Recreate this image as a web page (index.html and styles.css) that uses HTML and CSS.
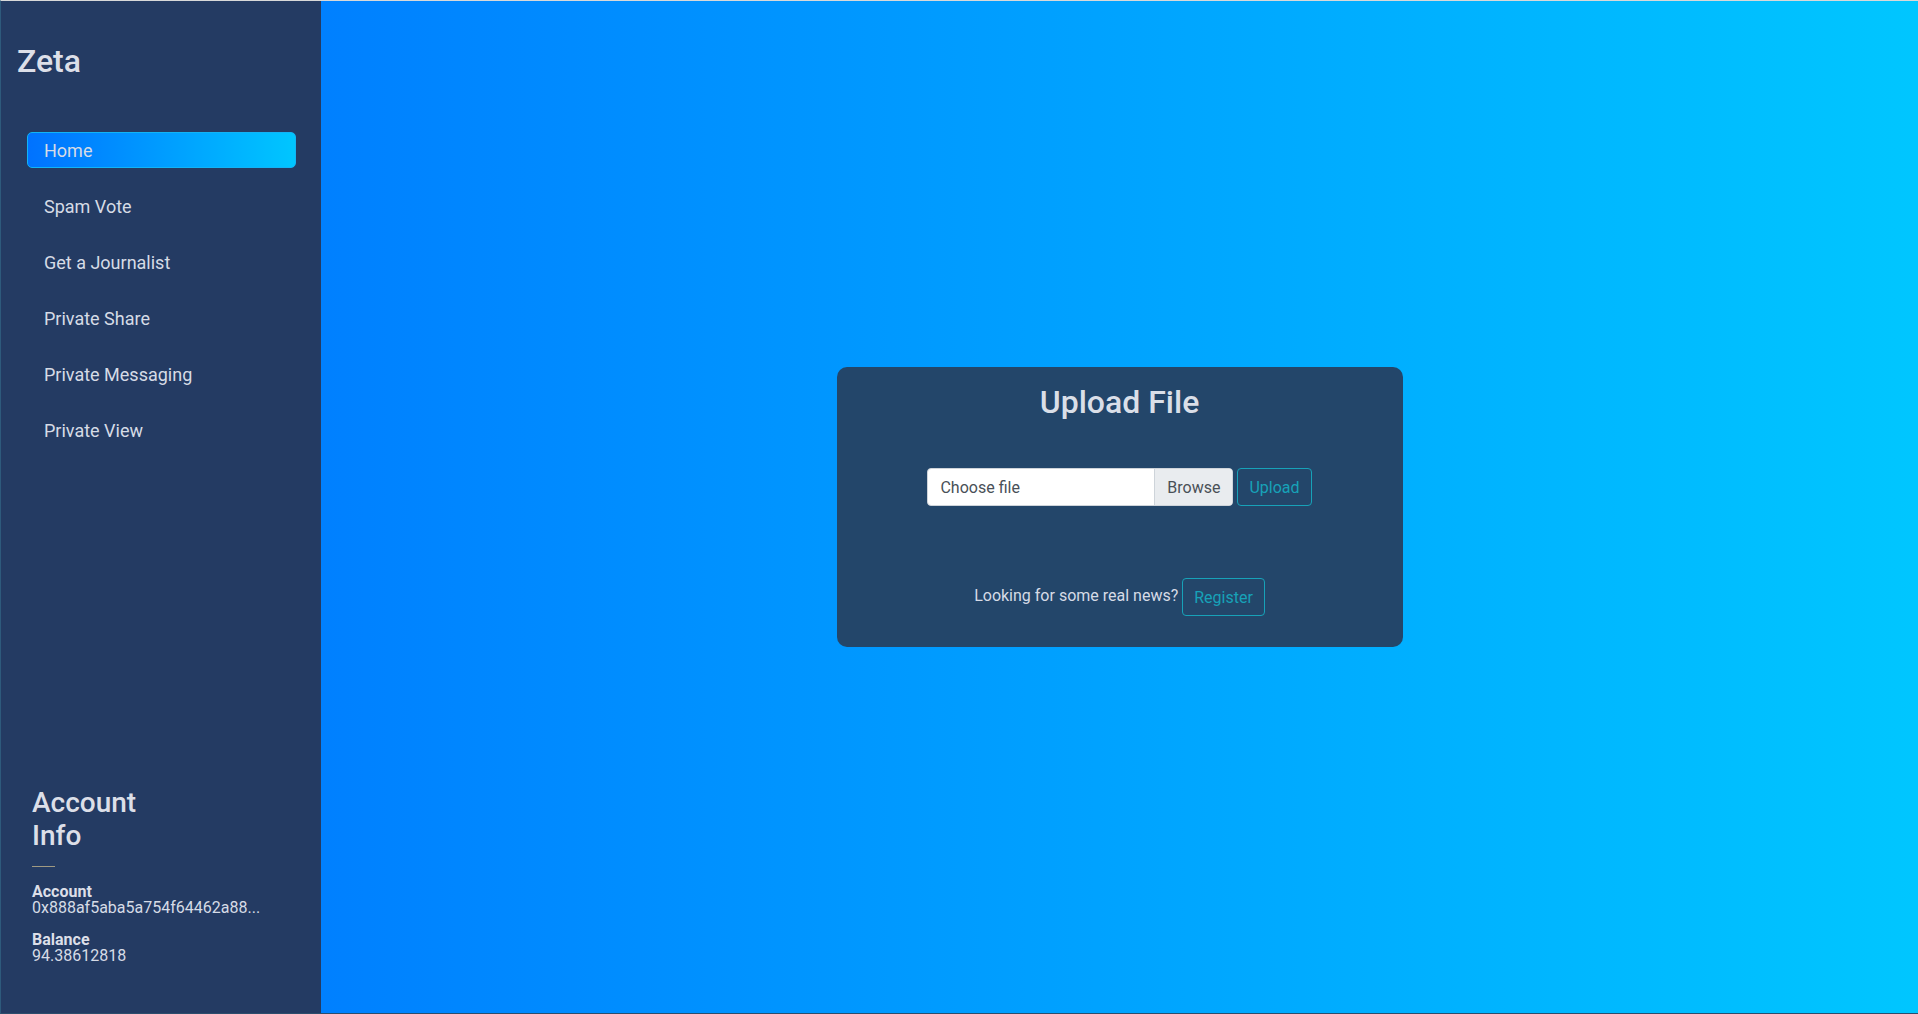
FILE: index.html
```html
<!DOCTYPE html>
<html lang="en">
<head>
<meta charset="utf-8">
<title>Zeta</title>
<link rel="stylesheet" href="styles.css">
</head>
<body>
<div class="app">
  <aside class="sidebar">
    <h2 class="brand">Zeta</h2>
    <nav class="nav">
      <a class="nav-item active" href="#">Home</a>
      <a class="nav-item" href="#">Spam Vote</a>
      <a class="nav-item" href="#">Get a Journalist</a>
      <a class="nav-item" href="#">Private Share</a>
      <a class="nav-item" href="#">Private Messaging</a>
      <a class="nav-item" href="#">Private View</a>
    </nav>
    <div class="account">
      <h3 class="account-title">Account<br>Info</h3>
      <hr class="account-rule">
      <div class="field">
        <div class="field-label">Account</div>
        <div class="field-value">0x888af5aba5a754f64462a88...</div>
      </div>
      <div class="field">
        <div class="field-label">Balance</div>
        <div class="field-value">94.38612818</div>
      </div>
    </div>
  </aside>
  <main class="main">
    <section class="card">
      <h2 class="card-title">Upload File</h2>
      <form class="upload-row">
        <div class="file-input">
          <span class="file-label">Choose file</span>
          <span class="file-browse">Browse</span>
        </div>
        <button type="button" class="btn-outline">Upload</button>
      </form>
      <div class="register-row">
        <span class="register-text">Looking for some real news?</span>
        <button type="button" class="btn-outline">Register</button>
      </div>
    </section>
  </main>
</div>
</body>
</html>
```
FILE: styles.css
```css
* { box-sizing: border-box; }
html, body { margin: 0; padding: 0; height: 100%; }
body {
  font-family: Roboto, "Liberation Sans", Arial, sans-serif;
  font-size: 16px;
  color: #d6dbe6;
  background: #0080ff;
}
.app {
  display: flex;
  height: 100vh;
  border-top: 1px solid #d9d9d9;
  border-left: 1px solid #2e5a7c;
  border-bottom: 1px solid #2c4d6c;
  background: linear-gradient(to right, #0072ff, #00c6ff);
}
.sidebar {
  width: 320px;
  flex: 0 0 320px;
  background: #243b63;
  display: flex;
  flex-direction: column;
  padding: 41px 0 49px 0;
}
.brand {
  margin: 0 0 0 16px;
  font-size: 32px;
  font-weight: 500;
  line-height: 1.2;
  color: #dcdfe8;
}
.nav {
  display: flex;
  flex-direction: column;
  gap: 20px;
  margin: 52px 25px 0 26px;
}
.nav-item {
  display: flex;
  align-items: center;
  height: 36px;
  padding: 0 16px;
  font-size: 18px;
  color: #d6dbe6;
  text-decoration: none;
  border: 1px solid transparent;
  border-radius: 5px;
}
.nav-item.active {
  background: linear-gradient(to right, #0072ff, #00c6ff);
  border-color: #12b4f5;
}
.account {
  margin-top: auto;
  padding-left: 31px;
}
.account-title {
  margin: 0;
  font-size: 28px;
  font-weight: 500;
  line-height: 1.2;
  color: #dcdfe8;
}
.account-rule {
  width: 23px;
  margin: 13px 0 17px 0;
  border: 0;
  border-top: 1px solid #a09a82;
}
.field { margin-bottom: 16px; line-height: 1; }
.field:last-child { margin-bottom: 0; }
.field-label { font-weight: 700; color: #dcdfe8; }
.field-value { color: #d6dbe6; }
.main {
  flex: 1;
  display: flex;
  align-items: center;
  justify-content: center;
}
.card {
  width: 566px;
  background: #23466a;
  border-radius: 10px;
  padding: 16px 16px 31px;
  display: flex;
  flex-direction: column;
  align-items: center;
}
.card-title {
  margin: 0;
  font-size: 32px;
  font-weight: 500;
  line-height: 1.2;
  color: #dadfe8;
}
.upload-row {
  margin: 47px 0 0 0;
  display: flex;
  gap: 4px;
}
.file-input {
  display: flex;
  width: 306px;
  height: 38px;
  background: #fff;
  border: 1px solid #ced4da;
  border-radius: 4px;
  overflow: hidden;
  color: #495057;
}
.file-label {
  flex: 1;
  display: flex;
  align-items: center;
  padding: 0 12px;
}
.file-browse {
  display: flex;
  align-items: center;
  padding: 0 12px;
  background: #e9ecef;
  border-left: 1px solid #ced4da;
}
.btn-outline {
  height: 38px;
  padding: 0 11px;
  font-family: inherit;
  font-size: 16px;
  color: #17a2b8;
  background: transparent;
  border: 1px solid #17a2b8;
  border-radius: 4px;
}
.register-row {
  margin-top: 72px;
  display: flex;
  align-items: center;
  gap: 4px;
}
.register-text { margin-top: -4px; }
```
